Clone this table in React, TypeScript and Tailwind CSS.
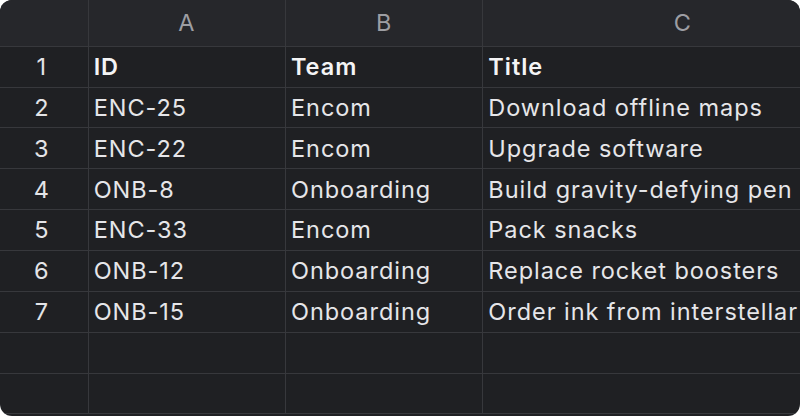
const columns = ['A', 'B', 'C'];

const rows: string[][] = [
  ['ID', 'Team', 'Title'],
  ['ENC-25', 'Encom', 'Download offline maps'],
  ['ENC-22', 'Encom', 'Upgrade software'],
  ['ONB-8', 'Onboarding', 'Build gravity-defying pen'],
  ['ENC-33', 'Encom', 'Pack snacks'],
  ['ONB-12', 'Onboarding', 'Replace rocket boosters'],
  ['ONB-15', 'Onboarding', 'Order ink from interstellar'],
  ['', '', ''],
  ['', '', ''],
];

const colWidths = ['w-[197.33px]', 'w-[197.33px]', 'w-[400px]'];

export default function App() {
  return (
    <div className="w-[800px] h-[416px] bg-white">
      <div
        className="w-[800px] h-[416px] overflow-hidden rounded-[12px] bg-[#1f2023] text-[23.5px] tracking-[0.95px] leading-none"
        style={{ fontFamily: 'Inter, "Noto Sans", sans-serif' }}
      >
        {/* Column header */}
        <div className="flex h-[46.8px] bg-[#26272b] border-b border-[#37383c] text-[#9d9ea3]">
          <div className="w-[88.67px] shrink-0 border-r border-[#37383c]" />
          {columns.map((c, i) => (
            <div
              key={c}
              className={`${colWidths[i]} shrink-0 flex items-center justify-center border-r border-[#37383c]`}
            >
              {c}
            </div>
          ))}
        </div>

        {/* Body rows */}
        {rows.map((row, r) => (
          <div key={r} className="flex h-[40.85px] border-b border-[#37383c]">
            <div className="w-[88.67px] shrink-0 flex items-center justify-center pr-1 border-r border-[#37383c] text-[#e4e4e7]">
              {row[0] !== '' ? r + 1 : ''}
            </div>
            {row.map((cell, i) => (
              <div
                key={i}
                className={`${colWidths[i]} shrink-0 flex items-center pl-[5px] whitespace-nowrap overflow-hidden border-r border-[#37383c] ${
                  r === 0 ? 'font-semibold text-[#f4f4f5]' : 'text-[#e6e6e9]'
                }`}
              >
                {cell}
              </div>
            ))}
          </div>
        ))}
      </div>
    </div>
  );
}
